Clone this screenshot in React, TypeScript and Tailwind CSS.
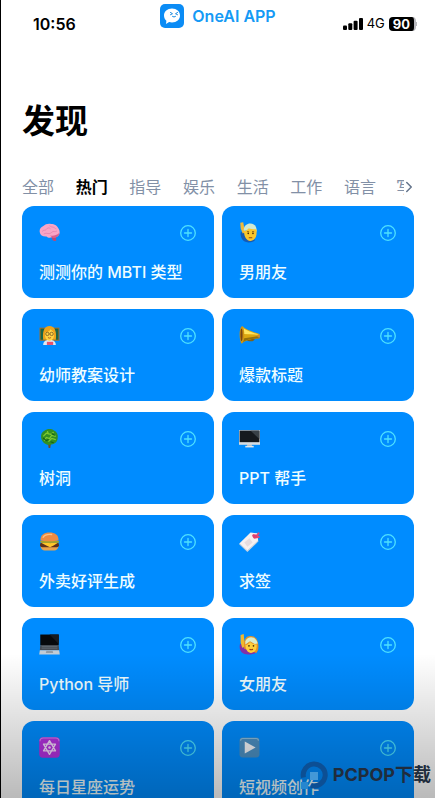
import React from 'react';
import { ChevronRight } from 'lucide-react';

type IconName =
  | 'brain'
  | 'man'
  | 'teacher'
  | 'megaphone'
  | 'tree'
  | 'desktop'
  | 'burger'
  | 'tag'
  | 'laptop'
  | 'woman'
  | 'star'
  | 'play';

const icons: Record<IconName, React.ReactNode> = {
  brain: (
    <>
      <path d="M11.500 13.500l4.500.8.400 3.200c-1.200.8-2.700.6-3.500-.4z" fill="#b84a78" />
      <path d="M.8 10c-.8-3 1-5.300 3-6C6 1.800 9 1.200 11.500 1.800c3.200 0 6.300 1.900 7.200 4.700 1.500 2.300 1.200 5-.4 6.500-1.500 1.800-4 1.700-5.500 1.400-2 .9-4.500.8-5.700-.7C3.500 13.900 1.200 12.600.8 10z" fill="#f9a5c6" />
      <path d="M10.500 12.800c3 .6 6 .1 8.800-2.300-.2 3.500-3.500 4.900-6.300 4.500z" fill="#d8608f" />
      <path d="M3 9c1.500-2 3-.5 4-2s2.500-2 4-.5M10 3.500c1 .5 1.200 1.200 3 1.300s2 1.500 3.500 1.700M4.500 11.500c1.500-.8 2.500-1 4-.5s3-.5 4-1.500 3 .3 4.500-.9" fill="none" stroke="#e583ab" strokeWidth=".8" />
    </>
  ),
  man: (
    <>
      <path d="M1.500 10c-.3 5 2 9 7.500 9.500 3 0 5.500-.8 6.500-2.500L7 14 4.500 9z" fill="#155bb5" />
      <path d="M1.200.8L4 .2l.8 4.300 1.500 5-2.800 1.500L1.600 6z" fill="#efb93a" />
      <path d="M4.500 8c0-4.500 3-6.500 6.300-6.500 3.700 0 6.200 2.500 6 7.500z" fill="#cfe9d2" />
      <path d="M4.800 9c2-.4 3.500-2 4.500-3 2 1 5.200 1 7.200.9.400 1 .4 2 .3 3.100 0 5-2.600 8-6 8s-6-4-6-9z" fill="#fcc62b" />
      <path d="M7.600 9.200h2M12.400 9.200h2" stroke="#845714" strokeWidth=".8" />
      <circle cx="8.800" cy="10.800" r=".8" fill="#4a2c0a" />
      <circle cx="13.300" cy="10.800" r=".8" fill="#4a2c0a" />
      <path d="M9.300 15h3.300" stroke="#9c4b12" />
    </>
  ),
  teacher: (
    <>
      <path d="M.5 2.500h19V15H.5z" fill="#a06e2b" />
      <path d="M1.500 3.500h17V14h-17z" fill="#17654a" />
      <path d="M4 14C3 6 5 1 10 1s7 5 6 13z" fill="#eda21b" />
      <path d="M4 19c0-3 2-5 6-5s6 2 6 5z" fill="#dfe9f2" />
      <path d="M6 7c2 0 4-1 5-3l3 3c1 5-1 8-4 8s-5-3-4-8z" fill="#ffd543" />
      <circle cx="8" cy="8.500" r="1.600" fill="none" stroke="#7b5925" strokeWidth=".8" />
      <circle cx="12" cy="8.500" r="1.600" fill="none" stroke="#7b5925" strokeWidth=".8" />
      <path d="M8.500 12q1.500 1 3 0" fill="none" stroke="#a34a20" strokeWidth=".8" />
      <path d="M7.500 16h6v3h-6z" fill="#e7516c" />
    </>
  ),
  megaphone: (
    <>
      <path d="M7 13l8-.5c0 2-1.500 3-3.500 3S7.500 15 7 14z" fill="#80631a" />
      <path d="M3 1c3 3 9 5.500 16.500 7.500v4C13 13 7 14 2 17.500z" fill="#dca711" />
      <path d="M4 3c4 2.500 9.500 4.500 15 6.300L4 8.500z" fill="#ffe45c" />
      <path d="M5 12.500l14.500-2v2.200C13 13 7 14 3 17z" fill="#94700c" />
      <ellipse cx="2.800" cy="9.300" rx="2.200" ry="8.200" fill="#cf9312" />
      <ellipse cx="2.400" cy="9.300" rx="1" ry="6" fill="#764313" />
      <circle cx="19" cy="10.500" r="1.500" fill="#c68a3c" />
    </>
  ),
  tree: (
    <>
      <path d="M8.500 14h3l-.8 5H9.200z" fill="#6e4b25" />
      <path d="M2 9c-.4-3 1-5.500 3.200-6.500C7.500.6 12 .4 14.200 2.300c2.600.9 4.300 4 3.600 7.100.2 3.500-3 6.300-6 6.300C7 17.300 2.500 13.500 2 9z" fill="#328f22" />
      <path d="M4 8l3-3 4 1 3-2M5 12l2-3 3 1 2-3 4 1M9 13l3-3 4 1M8 3l1 3" fill="none" stroke="#7fc932" strokeWidth="1.200" />
      <path d="M4 9.500l3 2.500 2-1M12 5l3 2M11 13l3 1" stroke="#155e18" fill="none" />
    </>
  ),
  desktop: (
    <>
      <path d="M8 14h4l.5 4h-5z" fill="#b4bbc2" />
      <path d="M6 17h8v1.500H6z" fill="#e2e7eb" />
      <path d="M0 2h20v14H0z" fill="#d6dce1" />
      <path d="M.6 2.500h18.800v11H.6z" fill="#15191e" />
      <path d="M11 2.500h8.400v8z" fill="#394148" />
    </>
  ),
  burger: (
    <>
      <path d="M1.500 14h17c0 3-2 4.500-4 4.500h-9c-2 0-4-1.500-4-4.500z" fill="#e6a24e" />
      <rect x="1" y="11" width="18" height="4.500" rx="2" fill="#60301b" />
      <path d="M1.500 11h17l-5 3-3 1.500-4-2z" fill="#ffc62c" />
      <path d="M1 9.500h18c.5 1.200-.5 2-2 1.600-2 .8-3-.2-5 .3s-4-.4-6 0-5.500-.3-5-1.900z" fill="#a3a32d" />
      <path d="M1.500 9C1 4 5 1.500 10 1.500S19 4 18.500 9c-3 1-14 1-17 0z" fill="#ef8b42" />
      <path d="M4 6c1-2 4-3 8-2.700" stroke="#ffc180" strokeWidth="1.300" fill="none" strokeLinecap="round" />
    </>
  ),
  tag: (
    <>
      <path d="M.3 12L11 1.500l6.500.7.800 7L8 19z" fill="#f6f0f0" />
      <path d="M.5 12.300L8 19.200 18.300 9.500" fill="none" stroke="#c9d3dd" />
      <path d="M5 11l5-4 3 4-5 4z" fill="#e6dcdf" />
      <path d="M13 3.500q3 4 6-2M14 6.500l5.500-1" fill="none" stroke="#e04674" strokeWidth="1.800" />
      <circle cx="15" cy="5" r="2" fill="#db3f70" />
    </>
  ),
  laptop: (
    <>
      <path d="M1.200.5h17.600v10H1.200z" fill="#07090c" />
      <path d="M10 .5h8.800v9z" fill="#171b20" />
      <path d="M1.200 10.500h17.600l.4 5H.8z" fill="#454b53" />
      <path d="M2.500 12h15M2.500 13.500h15" stroke="#69727a" strokeWidth=".7" />
      <path d="M.8 15.500h18.400l.6 4H.2z" fill="#c2cbd4" />
      <path d="M7 16h6l.5 2h-7z" fill="#929ca7" />
    </>
  ),
  woman: (
    <>
      <path d="M.8 10c-1 6 2 9.500 8 9.500 5 0 8-1.500 9-3.500L8 14 5 7z" fill="#8431a6" />
      <path d="M1.500 1l3-1 .5 6 2 6-4 1-1.400-5z" fill="#f1b82d" />
      <path d="M5 14C4 6 6 2 11 2c5 0 7.500 4 7.500 10 0 3-1 5-2 6z" fill="#e59227" />
      <path d="M6 7c2.500-6 10.500-5 11.800 2L15 9.500 10.500 7 6 10z" fill="#d8edcc" />
      <path d="M6.200 10.500c2-.5 3.300-1.500 4.300-3 1 1.500 4 2.500 6.300 2.500.5 5-2.300 8-5.300 8s-5.300-3-5.300-7.500z" fill="#ffd03a" />
      <circle cx="9.500" cy="11.300" r=".8" fill="#4a2c0a" />
      <circle cx="13.800" cy="11.300" r=".8" fill="#4a2c0a" />
      <path d="M10 14.500q1.700 1 3.300 0" fill="none" stroke="#9c3b12" />
    </>
  ),
  star: (
    <>
      <rect x=".2" y=".2" width="19.600" height="19.600" rx="3.500" fill="#b431df" />
      <path d="M1 4q0-3 3-3h12q3 0 3 3" fill="none" stroke="#d980ef" />
      <path d="M10 3.500l5.700 9.700H4.300zM10 16.500L4.300 6.800h11.400z" fill="none" stroke="#f4dcfc" strokeWidth="1.300" strokeLinejoin="round" />
      <circle cx="10" cy="10" r="1.200" fill="#f4dcfc" />
    </>
  ),
  play: (
    <>
      <rect x=".5" y=".5" width="19" height="19" rx="3" fill="#4c91c4" />
      <path d="M1.500 3.500q0-2 2-2h13q2 0 2 2" fill="none" stroke="#8cbddc" />
      <path d="M5.500 4.300L15.800 10 5.500 15.700z" fill="#f5f7fa" />
    </>
  ),
};

const tabs = ['全部', '热门', '指导', '娱乐', '生活', '工作', '语言'];

const cards: { title: string; icon: IconName }[] = [
  { title: '测测你的 MBTI 类型', icon: 'brain' },
  { title: '男朋友', icon: 'man' },
  { title: '幼师教案设计', icon: 'teacher' },
  { title: '爆款标题', icon: 'megaphone' },
  { title: '树洞', icon: 'tree' },
  { title: 'PPT 帮手', icon: 'desktop' },
  { title: '外卖好评生成', icon: 'burger' },
  { title: '求签', icon: 'tag' },
  { title: 'Python 导师', icon: 'laptop' },
  { title: '女朋友', icon: 'woman' },
  { title: '每日星座运势', icon: 'star' },
  { title: '短视频创作', icon: 'play' },
];

const StatusBar: React.FC = () => (
  <header className="grid h-12 grid-cols-[1fr_auto_1fr] text-black">
    <time className="pt-3 pl-8 text-base leading-6 font-semibold">10:56</time>
    <div className="flex h-8 items-center gap-2 text-[#159af5]">
      <svg viewBox="0 0 24 24" className="size-6" aria-hidden="true">
        <rect width="24" height="24" rx="5" fill="#0b8cf5" />
        <path d="M12 4.500c4.600 0 8 3 8 7s-3.400 7-8 7c-1 0-2-.1-2.900-.4L6 20l.4-3.200C4.900 15.500 4 13.600 4 11.500c0-4 3.400-7 8-7z" fill="#fff" />
        <path d="M10.500 8.500l2 1.200-2 1M17.500 8.500l-2 1.200 2 1M12.500 12.500q1.500 1.200 3 0" fill="none" stroke="#1689df" strokeWidth="1" strokeLinecap="round" />
      </svg>
      <span className="text-base font-semibold">OneAI APP</span>
    </div>
    <div className="flex items-center justify-end gap-1 pr-[18px]">
      <svg viewBox="0 0 20 12" className="h-3 w-5" aria-hidden="true">
        <rect y="7.500" width="4" height="4.500" rx="1" />
        <rect x="5.300" y="5.300" width="4" height="6.700" rx="1" />
        <rect x="10.600" y="2.800" width="4" height="9.200" rx="1" />
        <rect x="16" width="4" height="12" rx="1" />
      </svg>
      <span className="text-[13px]">4G</span>
      <span className="flex items-center">
        <span className="rounded-[4px] border-r-2 border-[#b8b8bd] bg-black px-1 text-[13px] leading-[14px] font-bold text-white">90</span>
        <span className="h-1 w-px bg-[#b8b8bd]" />
      </span>
    </div>
  </header>
);

const Card: React.FC<{ title: string; icon: IconName }> = ({ title, icon }) => (
  <article className="flex h-[92px] flex-col justify-between rounded-xl bg-[#008cff] px-[17px] pt-4 pb-[14px]">
    <div className="flex items-center justify-between">
      <svg viewBox="0 0 20 20" className="size-[21px]" aria-hidden="true">
        {icons[icon]}
      </svg>
      <button type="button" aria-label={`添加 ${title}`} className="text-[#4ee1ff]">
        <svg viewBox="0 0 18 18" className="size-[18px]" fill="none" stroke="currentColor" strokeWidth="1.300" strokeLinecap="round">
          <circle cx="9" cy="9" r="7.300" />
          <path d="M9 5.500v7M5.500 9h7" />
        </svg>
      </button>
    </div>
    <h2 className="text-base leading-6 font-medium whitespace-nowrap text-[#effdff]">{title}</h2>
  </article>
);

const Watermark: React.FC = () => (
  <div className="absolute right-1 bottom-2 flex items-center gap-1 text-[#202c3c]">
    <svg viewBox="0 0 30 30" className="size-[30px]" aria-hidden="true">
      <path d="M4.500 17.500A11 11 0 1 1 12 25.500" fill="none" stroke="#0c4f94" strokeWidth="5" />
      <path d="M11 12h8v8h-8z" fill="#4398d7" />
      <path d="M2 22h7v7H2z" fill="#2686cf" />
    </svg>
    <span className="text-lg leading-6 font-bold">PCPOP下载</span>
  </div>
);

const App: React.FC = () => {
  return (
    <div className="relative h-screen overflow-hidden border-l border-black bg-white font-['Inter','Noto_Sans_CJK_SC',sans-serif]">
      <StatusBar />
      <main className="px-[21px]">
        <h1 className="pt-[49px] text-[33px] leading-[48px] font-bold text-black">发现</h1>
        <nav className="mt-[31px] flex h-[30px] items-start">
          <div className="flex flex-1 justify-between">
            {tabs.map((tab) => (
              <button
                key={tab}
                type="button"
                className={tab === '热门' ? 'text-base leading-[22px] font-bold text-black' : 'text-base leading-[22px] text-[#8290a6]'}
              >
                {tab}
              </button>
            ))}
          </div>
          <button type="button" className="ml-5 w-2 overflow-hidden text-base leading-[22px] whitespace-nowrap text-[#8290a6]">
            写作
          </button>
          <button type="button" aria-label="更多分类" className="-mr-1 -ml-1 flex h-[22px] items-center text-[#64748b]">
            <ChevronRight className="size-[18px]" />
          </button>
        </nav>
        <section className="grid grid-cols-2 gap-x-2 gap-y-[11px]">
          {cards.map((card) => (
            <Card key={card.title} title={card.title} icon={card.icon} />
          ))}
        </section>
      </main>
      <div className="pointer-events-none absolute inset-x-0 bottom-0 h-36 bg-linear-to-b from-transparent to-black/27" />
      <Watermark />
    </div>
  );
};

export default App;
